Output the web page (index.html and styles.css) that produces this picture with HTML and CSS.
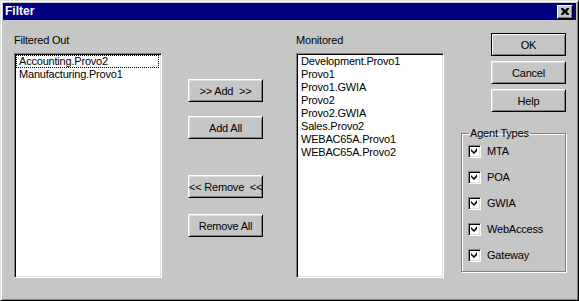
FILE: index.html
```html
<!DOCTYPE html>
<html>
<head>
<meta charset="utf-8">
<link rel="stylesheet" href="styles.css">
</head>
<body>
<div class="dialog">
  <div class="titlebar">
    <span class="title">Filter</span>
    <button class="close" aria-label="Close"><svg width="8" height="7" viewBox="0 0 8 7"><path d="M0 0h2l2 2 2-2h2v1L6 3.5 8 6v1H6L4 5 2 7H0V6l2-2.5L0 1z" fill="#000"/></svg></button>
  </div>
  <div class="body">
    <div class="col col-list">
      <div class="label">Filtered Out</div>
      <div class="listbox">
        <div class="item focus">Accounting.Provo2</div>
        <div class="item">Manufacturing.Provo1</div>
      </div>
    </div>
    <div class="col col-mid">
      <button class="btn">&gt;&gt; Add  &gt;&gt;</button>
      <button class="btn b-addall">Add All</button>
      <button class="btn b-remove">&lt;&lt; Remove  &lt;&lt;</button>
      <button class="btn b-removeall">Remove All</button>
    </div>
    <div class="col col-list col-mon">
      <div class="label">Monitored</div>
      <div class="listbox">
        <div class="item">Development.Provo1</div>
        <div class="item">Provo1</div>
        <div class="item">Provo1.GWIA</div>
        <div class="item">Provo2</div>
        <div class="item">Provo2.GWIA</div>
        <div class="item">Sales.Provo2</div>
        <div class="item">WEBAC65A.Provo1</div>
        <div class="item">WEBAC65A.Provo2</div>
      </div>
    </div>
    <div class="col col-right">
      <button class="btn default">OK</button>
      <button class="btn b-side">Cancel</button>
      <button class="btn b-side">Help</button>
      <fieldset class="group">
        <legend>Agent Types</legend>
        <label class="check"><span class="box"><svg width="7" height="7" viewBox="0 0 7 7"><path d="M6 0v3L3 6 0 3V1l3 3z" fill="#000"/></svg></span>MTA</label>
        <label class="check"><span class="box"><svg width="7" height="7" viewBox="0 0 7 7"><path d="M6 0v3L3 6 0 3V1l3 3z" fill="#000"/></svg></span>POA</label>
        <label class="check"><span class="box"><svg width="7" height="7" viewBox="0 0 7 7"><path d="M6 0v3L3 6 0 3V1l3 3z" fill="#000"/></svg></span>GWIA</label>
        <label class="check"><span class="box"><svg width="7" height="7" viewBox="0 0 7 7"><path d="M6 0v3L3 6 0 3V1l3 3z" fill="#000"/></svg></span>WebAccess</label>
        <label class="check"><span class="box"><svg width="7" height="7" viewBox="0 0 7 7"><path d="M6 0v3L3 6 0 3V1l3 3z" fill="#000"/></svg></span>Gateway</label>
      </fieldset>
    </div>
  </div>
</div>
</body>
</html>
```
FILE: styles.css
```css
* { box-sizing: border-box; }
html, body { margin: 0; padding: 0; background: #c6c6c6; }
body {
  font-family: "Liberation Sans", Arial, sans-serif;
  font-size: 11px;
  letter-spacing: -0.2px;
  color: #000;
}
.dialog {
  width: 579px;
  height: 301px;
  background: #c6c6c6;
  border: 1px solid;
  border-color: #dfdfdf #000 #000 #dfdfdf;
  box-shadow: inset 1px 1px 0 #fff, inset -1px -1px 0 #808080;
  padding: 2px;
}
.titlebar {
  height: 17px;
  background: #000080;
  color: #fff;
  display: flex;
  align-items: center;
  justify-content: space-between;
  padding: 0 3px 0 2px;
}
.title {
  font-weight: bold;
  font-size: 12px;
  letter-spacing: 0;
  line-height: 17px;
}
.close {
  width: 16px;
  height: 14px;
  padding: 0;
  margin: 0;
  background: #c6c6c6;
  border: 1px solid;
  border-color: #fff #000 #000 #fff;
  box-shadow: inset -1px -1px 0 #808080;
  display: flex;
  align-items: center;
  justify-content: center;
}
.body {
  display: flex;
  align-items: flex-start;
  padding-left: 11px;
}
.col { display: flex; flex-direction: column; }
.col-list { width: 148px; margin-top: 14px; }
.col-mon { margin-left: 33px; }
.label { line-height: 13px; height: 13px; margin-bottom: 6px; }
.listbox {
  height: 225px;
  background: #fff;
  border: 1px solid;
  border-color: #808080 #fff #fff #808080;
  box-shadow: inset 1px 1px 0 #000, inset -1px -1px 0 #dfdfdf;
  padding: 1px 2px 1px 1px;
}
.item {
  line-height: 13px;
  height: 13px;
  padding-left: 3px;
  white-space: nowrap;
}
.item.focus {
  border: 1px dotted #000;
  line-height: 11px;
  padding-left: 2px;
}
.col-mid { width: 75px; margin-left: 26px; margin-top: 59px; }
.btn {
  width: 75px;
  height: 23px;
  padding: 0;
  margin: 0;
  font-family: inherit;
  font-size: 11px;
  letter-spacing: -0.2px;
  color: #000;
  background: #c6c6c6;
  border: 1px solid;
  border-color: #fff #000 #000 #fff;
  box-shadow: inset 1px 1px 0 #dfdfdf, inset -1px -1px 0 #808080;
  white-space: pre;
}
.b-addall { margin-top: 14px; }
.b-remove { margin-top: 36px; }
.b-removeall { margin-top: 16px; }
.col-right { width: 105px; margin-left: 17px; margin-top: 13px; align-items: flex-end; }
.btn.default {
  border: 1px solid #000;
  box-shadow: inset 1px 1px 0 #fff, inset -1px -1px 0 #808080;
}
.b-side { margin-top: 5px; }
.group {
  align-self: stretch;
  margin: 15px 0 0 0;
  height: 145px;
  padding: 5px 0 0 6px;
  border: 1px solid #808080;
  box-shadow: inset 1px 1px 0 #fff, 1px 1px 0 #fff;
  min-width: 0;
}
.group legend {
  padding: 0 1px;
  margin-left: 1px;
  line-height: 13px;
}
.check {
  display: flex;
  align-items: center;
  height: 13px;
  margin-bottom: 13px;
  line-height: 13px;
}
.box {
  width: 13px;
  height: 13px;
  background: #fff;
  border: 1px solid;
  border-color: #808080 #fff #fff #808080;
  box-shadow: inset 1px 1px 0 #000, inset -1px -1px 0 #dfdfdf;
  display: flex;
  align-items: center;
  justify-content: center;
  margin-right: 6px;
}
```
